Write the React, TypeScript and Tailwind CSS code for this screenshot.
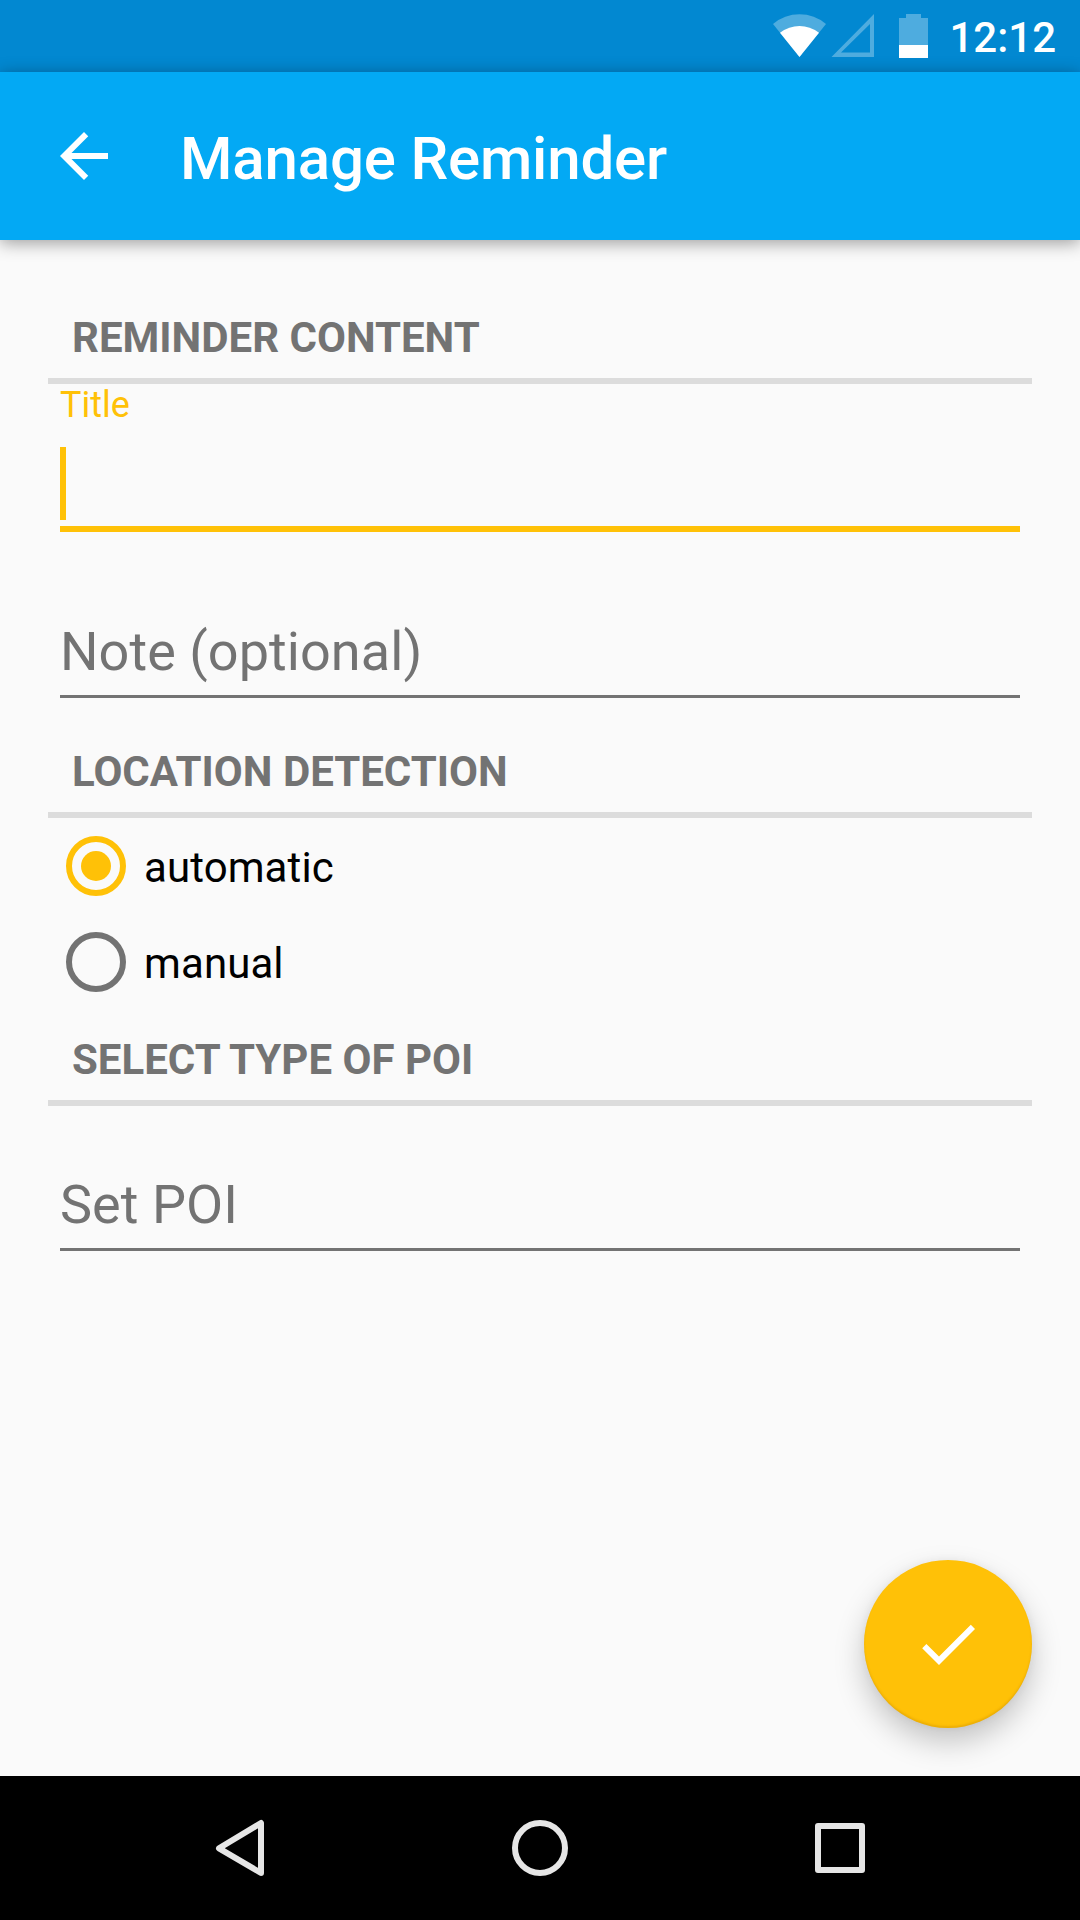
import React from "react";

function StatusBar() {
  return (
    <div className="flex h-[72px] justify-end bg-[#0288d1] pr-[24px] text-white">
      <svg className="h-[72px] w-[179px]" viewBox="770 0 179 72">
        <path d="M799.5 57 L773 24 Q784.5 14.3 799.5 14.3 Q814.5 14.3 826 24 Z" fill="#fff" fillOpacity=".3" />
        <path d="M799.5 57 L780 32.7 Q789 26 799.5 26 Q810 26 819 32.7 Z" fill="#fff" />
        <path d="M874 14 V57 H831.5 Z M870 24 L841 52.5 H870 Z" fill="#fff" fillOpacity=".3" fillRule="evenodd" />
        <path d="M899 18 H906 V14 H921 V18 H928 V45 H899 Z" fill="#fff" fillOpacity=".3" />
        <path d="M899 45 H928 V58 H899 Z" fill="#fff" />
      </svg>
      <span className="pt-[3px] text-[42px] font-medium leading-[70px]">12:12</span>
    </div>
  );
}

function AppBar() {
  return (
    <header className="relative z-10 flex h-[168px] items-center bg-[#03a9f4] pl-[48px] text-white shadow-[0_3px_16px_rgba(0,0,0,0.38)]">
      <svg className="h-[72px] w-[72px]" viewBox="0 0 24 24" fill="currentColor">
        <path d="M20 11H7.83l5.59-5.59L12 4l-8 8 8 8 1.41-1.41L7.83 13H20v-2z" />
      </svg>
      <h1 className="ml-[60px] pt-[5px] text-[60px] font-medium leading-[72px] tracking-[-0.17px]">Manage Reminder</h1>
    </header>
  );
}

function SectionHeader({ children }: { children: React.ReactNode }) {
  return (
    <h2 className="h-[71px] border-b-[6px] border-[#dcdcdc] pl-[24px] text-[42px] font-bold leading-[49px] text-[#737373]">
      {children}
    </h2>
  );
}

function Field({ label }: { label: string }) {
  return (
    <div className="mx-[12px] h-[79px] border-b-[3px] border-[#737373] pt-px text-[54px] leading-[64px] tracking-[0.06px] text-[#737373]">
      {label}
    </div>
  );
}

function RadioRow({ label, checked }: { label: string; checked?: boolean }) {
  return (
    <div className="flex h-[96px] items-center pl-[18px]">
      <span
        className={
          checked
            ? "flex h-[60px] w-[60px] items-center justify-center rounded-full border-[6px] border-[#ffc107]"
            : "h-[60px] w-[60px] rounded-full border-[6px] border-[#737373]"
        }
      >
        {checked && <span className="h-[30px] w-[30px] rounded-full bg-[#ffc107]" />}
      </span>
      <span className="ml-[18px] pt-[3px] text-[42px] leading-[49px] tracking-[0.1px] text-black">{label}</span>
    </div>
  );
}

function NavBar() {
  return (
    <nav className="flex h-[144px] items-center justify-center gap-[228px] bg-black">
      <svg className="h-[72px] w-[72px]" viewBox="0 0 72 72" fill="none" stroke="#e6e6e6" strokeWidth="6" strokeLinejoin="round">
        <path d="M57 11 V61 L15 36.3 Z" />
      </svg>
      <svg className="h-[72px] w-[72px]" viewBox="0 0 72 72" fill="none" stroke="#e6e6e6" strokeWidth="6">
        <circle cx="36" cy="36" r="25" />
      </svg>
      <svg className="h-[72px] w-[72px]" viewBox="0 0 72 72" fill="none" stroke="#e6e6e6" strokeWidth="6" strokeLinejoin="round">
        <rect x="14" y="14" width="44" height="44" />
      </svg>
    </nav>
  );
}

export default function App() {
  return (
    <div className="flex h-[1920px] w-[1080px] flex-col overflow-hidden bg-[#fafafa] font-[Roboto,sans-serif]">
      <StatusBar />
      <AppBar />
      <main className="relative flex-1 px-[48px] pt-[73px]">
        <SectionHeader>REMINDER CONTENT</SectionHeader>
        <div className="mx-[12px] h-[148px] border-b-[6px] border-[#ffc107]">
          <div className="text-[36px] leading-[42px] text-[#ffc107]">Title</div>
          <div className="mt-[21px] h-[73px] w-[6px] bg-[#ffc107]" />
        </div>
        <div className="mt-[87px]">
          <Field label="Note (optional)" />
        </div>
        <div className="mt-[49px]">
          <SectionHeader>LOCATION DETECTION</SectionHeader>
        </div>
        <RadioRow label="automatic" checked />
        <RadioRow label="manual" />
        <div className="mt-[25px]">
          <SectionHeader>SELECT TYPE OF POI</SectionHeader>
        </div>
        <div className="mt-[66px]">
          <Field label="Set POI" />
        </div>
        <button
          aria-label="Save"
          className="absolute bottom-[48px] right-[48px] flex h-[168px] w-[168px] items-center justify-center rounded-full bg-[#ffc107] text-white shadow-[0_14px_30px_rgba(0,0,0,0.22),0_0_8px_rgba(0,0,0,0.05),inset_0_-2px_2px_rgba(180,120,0,0.25)]"
        >
          <svg className="h-[72px] w-[72px]" viewBox="0 0 24 24" fill="currentColor">
            <path d="M9 16.2L4.8 12l-1.4 1.4L9 19 21 7l-1.4-1.4L9 16.2z" />
          </svg>
        </button>
      </main>
      <NavBar />
    </div>
  );
}
